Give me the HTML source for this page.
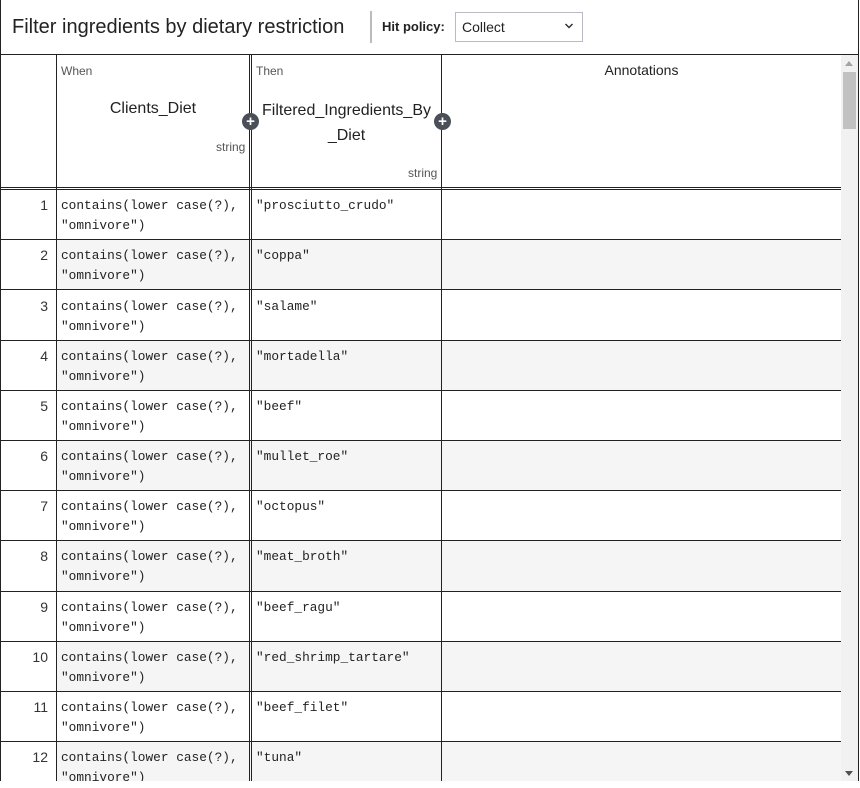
<!DOCTYPE html>
<html><head><meta charset="utf-8"><style>
*{margin:0;padding:0;box-sizing:border-box}
body{width:860px;height:785px;overflow:hidden;background:#fff;font-family:"Liberation Sans",Arial,sans-serif;color:#222;position:relative}
.a{position:absolute}
.hl{position:absolute;background:#222;height:1px}
.vl{position:absolute;background:#222;width:1px}
.code{font-family:"Liberation Mono",monospace;font-size:12.8px;line-height:20px;color:#222}
.num{font-size:14px;color:#333;text-align:right;width:48px;left:0}
.plus{position:absolute;width:17px;height:17px;border-radius:50%;background:#4a4f58;color:#fff;font-weight:bold;font-size:15px;line-height:17px;text-align:center}
</style></head><body>
<div class="vl" style="left:0;top:0;height:785px"></div>
<div class="vl" style="top:0;height:785px;left:858px"></div>
<div class="a" style="left:12px;top:16px;font-size:20px;color:#222">Filter ingredients by dietary restriction</div>
<div class="a" style="left:370px;top:11px;width:2px;height:32px;background:#bbb"></div>
<div class="a" style="left:382px;top:19px;font-size:13px;font-weight:bold">Hit policy:</div>
<div class="a" style="left:455px;top:12px;width:128px;height:30px;border:1px solid #b8bac4;font-size:14px;padding:6px 6px">Collect</div>
<svg class="a" style="left:564px;top:22px" width="10" height="8" viewBox="0 0 10 8"><path d="M1.5 2 L5 5.5 L8.5 2" fill="none" stroke="#333" stroke-width="1.5"/></svg>
<div class="hl" style="left:0;top:54px;width:859px"></div>
<div class="a" style="left:841px;top:55px;width:17px;height:730px;background:#f1f1f1"></div>
<div class="a" style="left:843px;top:72px;width:13px;height:57px;background:#c1c1c1"></div>
<svg class="a" style="left:845px;top:61px" width="8" height="5"><path d="M0 5 L4 0 L8 5Z" fill="#a3a3a3"/></svg>
<svg class="a" style="left:845px;top:771px" width="8" height="5"><path d="M0 0 L4 5 L8 0Z" fill="#505050"/></svg>
<div class="a" style="left:57px;top:240px;width:784px;height:50px;background:#f5f5f5"></div>
<div class="a" style="left:57px;top:341px;width:784px;height:50px;background:#f5f5f5"></div>
<div class="a" style="left:57px;top:441px;width:784px;height:50px;background:#f5f5f5"></div>
<div class="a" style="left:57px;top:541px;width:784px;height:51px;background:#f5f5f5"></div>
<div class="a" style="left:57px;top:642px;width:784px;height:50px;background:#f5f5f5"></div>
<div class="a" style="left:57px;top:742px;width:784px;height:43px;background:#f5f5f5"></div>
<div class="hl" style="left:0;top:187px;width:841px"></div>
<div class="hl" style="left:0;top:189px;width:841px"></div>
<div class="hl" style="left:0;top:239px;width:841px"></div>
<div class="hl" style="left:0;top:289px;width:841px"></div>
<div class="hl" style="left:0;top:340px;width:841px"></div>
<div class="hl" style="left:0;top:390px;width:841px"></div>
<div class="hl" style="left:0;top:440px;width:841px"></div>
<div class="hl" style="left:0;top:490px;width:841px"></div>
<div class="hl" style="left:0;top:540px;width:841px"></div>
<div class="hl" style="left:0;top:591px;width:841px"></div>
<div class="hl" style="left:0;top:641px;width:841px"></div>
<div class="hl" style="left:0;top:691px;width:841px"></div>
<div class="hl" style="left:0;top:741px;width:841px"></div>
<div class="vl" style="left:56px;top:55px;height:730px"></div>
<div class="vl" style="left:249px;top:55px;height:730px"></div>
<div class="vl" style="left:251px;top:55px;height:730px"></div>
<div class="vl" style="left:441px;top:55px;height:730px"></div>
<div class="a" style="left:61px;top:64px;font-size:12px;color:#555">When</div>
<div class="a" style="left:57px;top:100px;width:192px;text-align:center;font-size:16px">Clients_Diet</div>
<div class="a" style="left:216px;top:140px;font-size:12px;color:#555">string</div>
<div class="a" style="left:256px;top:64px;font-size:12px;color:#555">Then</div>
<div class="a" style="left:252px;top:98px;width:189px;text-align:center;font-size:16px;line-height:25px">Filtered_Ingredients_By<br>_Diet</div>
<div class="a" style="left:408px;top:166px;font-size:12px;color:#555">string</div>
<div class="a" style="left:442px;top:62px;width:399px;text-align:center;font-size:14px">Annotations</div>
<div class="plus" style="left:242px;top:113px">+</div>
<div class="plus" style="left:434px;top:113px">+</div>
<div class="a num" style="top:197px">1</div><div class="a code" style="left:61px;top:196px">contains(lower case(?),<br>"omnivore")</div><div class="a code" style="left:256px;top:196px">"prosciutto_crudo"</div>
<div class="a num" style="top:247px">2</div><div class="a code" style="left:61px;top:246px">contains(lower case(?),<br>"omnivore")</div><div class="a code" style="left:256px;top:246px">"coppa"</div>
<div class="a num" style="top:298px">3</div><div class="a code" style="left:61px;top:297px">contains(lower case(?),<br>"omnivore")</div><div class="a code" style="left:256px;top:297px">"salame"</div>
<div class="a num" style="top:348px">4</div><div class="a code" style="left:61px;top:347px">contains(lower case(?),<br>"omnivore")</div><div class="a code" style="left:256px;top:347px">"mortadella"</div>
<div class="a num" style="top:398px">5</div><div class="a code" style="left:61px;top:397px">contains(lower case(?),<br>"omnivore")</div><div class="a code" style="left:256px;top:397px">"beef"</div>
<div class="a num" style="top:448px">6</div><div class="a code" style="left:61px;top:447px">contains(lower case(?),<br>"omnivore")</div><div class="a code" style="left:256px;top:447px">"mullet_roe"</div>
<div class="a num" style="top:498px">7</div><div class="a code" style="left:61px;top:497px">contains(lower case(?),<br>"omnivore")</div><div class="a code" style="left:256px;top:497px">"octopus"</div>
<div class="a num" style="top:548px">8</div><div class="a code" style="left:61px;top:547px">contains(lower case(?),<br>"omnivore")</div><div class="a code" style="left:256px;top:547px">"meat_broth"</div>
<div class="a num" style="top:599px">9</div><div class="a code" style="left:61px;top:598px">contains(lower case(?),<br>"omnivore")</div><div class="a code" style="left:256px;top:598px">"beef_ragu"</div>
<div class="a num" style="top:649px">10</div><div class="a code" style="left:61px;top:648px">contains(lower case(?),<br>"omnivore")</div><div class="a code" style="left:256px;top:648px">"red_shrimp_tartare"</div>
<div class="a num" style="top:699px">11</div><div class="a code" style="left:61px;top:698px">contains(lower case(?),<br>"omnivore")</div><div class="a code" style="left:256px;top:698px">"beef_filet"</div>
<div class="a num" style="top:749px">12</div><div class="a code" style="left:61px;top:748px">contains(lower case(?),<br>"omnivore")</div><div class="a code" style="left:256px;top:748px">"tuna"</div>
<div class="a" style="left:0;top:781px;width:860px;height:4px;background:#fff"></div>
</body></html>
